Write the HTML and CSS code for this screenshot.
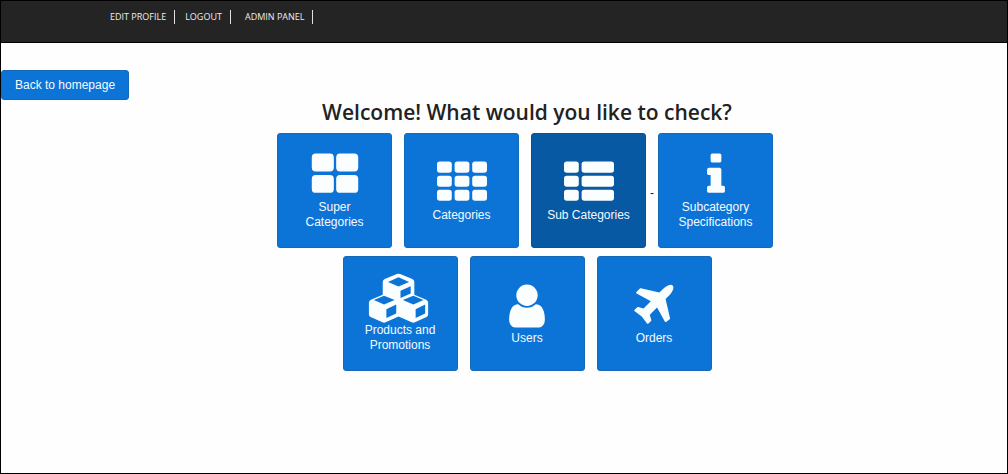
FILE: index.html
```html
<!DOCTYPE html>
<html lang="en">
<head>
<meta charset="utf-8">
<title>Admin Panel</title>
<link rel="stylesheet" href="styles.css">
</head>
<body>
<header class="topbar">
  <nav class="topnav">
    <a href="#profile">EDIT PROFILE</a>
    <a href="#logout">LOGOUT</a>
    <a class="wide" href="#admin">ADMIN PANEL</a>
  </nav>
</header>
<main class="page">
  <button class="back" type="button">Back to homepage</button>
  <section class="panel">
    <h1 class="title">Welcome! What would you like to check?</h1>
    <div class="row row-first">
      <a class="tile" href="#super">
        <svg class="icon" viewBox="0 0 1792 1792" aria-hidden="true">
          <rect x="64" y="128" width="790" height="640" rx="140"/><rect x="938" y="128" width="790" height="640" rx="140"/>
          <rect x="64" y="896" width="790" height="640" rx="140"/><rect x="938" y="896" width="790" height="640" rx="140"/>
        </svg>
        <span>Super<br>Categories</span>
      </a>
      <a class="tile" href="#categories">
        <svg class="icon" viewBox="0 0 1792 1792" aria-hidden="true">
          <rect x="0" y="128" width="530" height="400" rx="100"/><rect x="631" y="128" width="530" height="400" rx="100"/><rect x="1262" y="128" width="530" height="400" rx="100"/>
          <rect x="0" y="632" width="530" height="400" rx="100"/><rect x="631" y="632" width="530" height="400" rx="100"/><rect x="1262" y="632" width="530" height="400" rx="100"/>
          <rect x="0" y="1136" width="530" height="400" rx="100"/><rect x="631" y="1136" width="530" height="400" rx="100"/><rect x="1262" y="1136" width="530" height="400" rx="100"/>
        </svg>
        <span>Categories</span>
      </a>
      <a class="tile tile-active" href="#sub">
        <svg class="icon" viewBox="0 0 1792 1792" aria-hidden="true">
          <rect x="0" y="128" width="530" height="400" rx="100"/><rect x="631" y="128" width="1161" height="400" rx="100"/>
          <rect x="0" y="632" width="530" height="400" rx="100"/><rect x="631" y="632" width="1161" height="400" rx="100"/>
          <rect x="0" y="1136" width="530" height="400" rx="100"/><rect x="631" y="1136" width="1161" height="400" rx="100"/>
        </svg>
        <span>Sub Categories</span>
      </a>
      <span class="dash">-</span>
      <a class="tile" href="#specifications">
        <svg class="icon" viewBox="0 0 1792 1792" aria-hidden="true">
          <path d="M1216 1344v128q0 26-19 45t-45 19h-512q-26 0-45-19t-19-45v-128q0-26 19-45t45-19h64v-384h-64q-26 0-45-19t-19-45v-128q0-26 19-45t45-19h384q26 0 45 19t19 45v576h64q26 0 45 19t19 45zm-128-1152v192q0 26-19 45t-45 19h-256q-26 0-45-19t-19-45v-192q0-26 19-45t45-19h256q26 0 45 19t19 45z"/>
        </svg>
        <span>Subcategory<br>Specifications</span>
      </a>
    </div>
    <div class="row">
      <a class="tile" href="#products">
        <svg class="icon icon-wide" viewBox="0 0 194 152" aria-hidden="true">
          <path fill-rule="evenodd" d="M86 3Q91 1 96 3L133 18Q139 21 139 27V66L175 81Q181 84 181 90V126Q181 131 176 134L141 150Q136 152 131 150L91 132L52 150Q47 152 42 150L6 134Q1 131 1 126V90Q1 84 7 81L43 66V27Q43 21 49 18ZM91 13L59 27L91 41L123 27ZM97 54V76L128 62V40ZM47 69L16 82L47 96L79 82ZM54 110V137L84 123V96ZM136 69L104 82L136 96L167 82ZM143 110V137L172 123V96Z"/>
        </svg>
        <span>Products and<br>Promotions</span>
      </a>
      <a class="tile" href="#users">
        <svg class="icon" viewBox="0 0 1792 1792" aria-hidden="true">
          <path d="M1536 1399q0 109-62.500 187t-150.500 78h-854q-88 0-150.500-78t-62.500-187q0-85 8.500-160.500t31.500-152 58.500-131 94-89 134.500-34.500q131 128 313 128t313-128q76 0 134.500 34.500t94 89 58.500 131 31.500 152 8.500 160.500zm-256-887q0 159-112.500 271.500t-271.500 112.500-271.500-112.500-112.500-271.500 112.500-271.500 271.500-112.500 271.500 112.500 112.500 271.500z"/>
        </svg>
        <span>Users</span>
      </a>
      <a class="tile" href="#orders">
        <svg class="icon" viewBox="0 0 1792 1792" aria-hidden="true">
          <path d="M1568 160q44 52 12 148t-108 172l-161 161 160 696q5 19-12 33l-128 96q-7 6-19 6-4 0-7-1-15-3-21-16l-279-508-259 259 53 194q5 17-8 31l-96 96q-9 9-23 9h-2q-15-2-24-13l-189-252-252-189q-11-7-13-23-1-13 9-25l96-97q9-9 23-9 6 0 8 1l194 53 259-259-508-279q-14-8-17-24-2-16 9-27l128-128q14-13 30-8l665 159 160-160q76-76 172-108t148 12z"/>
        </svg>
        <span>Orders</span>
      </a>
    </div>
  </section>
</main>
</body>
</html>
```
FILE: styles.css
```css
* { box-sizing: border-box; }
body {
  margin: 0;
  min-height: 100vh;
  border: 1px solid #000;
  background: #fefefe;
  color: #222;
  font-family: "Liberation Sans", Arial, sans-serif;
  font-size: 12px;
}
.topbar {
  min-height: 42px;
  padding: 9px 0 0 109px;
  background: #242424;
  border-bottom: 1px solid #000;
}
.topnav { display: flex; gap: 10px; }
.topnav a {
  padding-right: 8px;
  border-right: 1px solid #e0e0e0;
  color: #eee;
  font: 9px/14px "Open Sans", "Noto Sans", sans-serif;
  text-decoration: none;
}
.topnav .wide { padding-left: 4px; }
.page { padding-top: 27px; }
.back {
  display: block;
  padding: 6px 13px;
  border: 1px solid #1669b8;
  border-radius: 3px;
  background: #0d74d7;
  color: #f4faff;
  font: 12px/16px "Liberation Sans", Arial, sans-serif;
}
.panel {
  display: flex;
  flex-direction: column;
  gap: 8px;
  padding-left: 46px;
}
.title {
  margin: 0;
  font: 600 21px/25px "Open Sans", "Noto Sans", sans-serif;
  text-align: center;
}
.row {
  display: flex;
  flex-wrap: wrap;
  justify-content: center;
  gap: 8px 12px;
}
.row-first { padding-right: 4px; }
.tile {
  display: flex;
  flex-direction: column;
  align-items: center;
  justify-content: center;
  width: 115px;
  height: 115px;
  padding-bottom: 1px;
  border: 1px solid #1669b8;
  border-radius: 3px;
  background: #0d74d7;
  color: #f4faff;
  line-height: 15px;
  text-align: center;
  text-decoration: none;
}
.tile-active { background: #0659a2; border-color: #124f86; }
.icon { flex: none; width: 50px; height: 50px; fill: #fafeff; }
.icon-wide { width: 65px; }
.dash {
  align-self: center;
  width: 12px;
  margin: 0 -12px;
  padding-top: 4px;
  text-align: center;
}
```
